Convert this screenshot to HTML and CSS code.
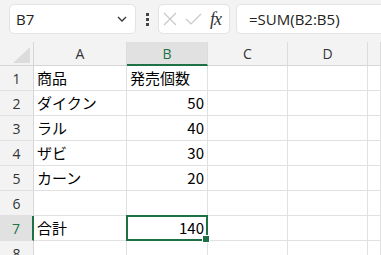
FILE: index.html
```
<html lang="ja">

<head>
  <meta charset="UTF-8">
  <title>Excel</title>
  <link rel="stylesheet" href="styles.css">
</head>

<body>

  <div class="toolbar">
    <div class="name-box">
      <span>B7</span>
      <svg class="chevron" width="12" height="8" viewBox="0 0 12 8">
        <path d="M2 2 L6 6 L10 2" fill="none" stroke="#333" stroke-width="1.3" />
      </svg>
    </div>
    <div class="dots">
      <i></i><i></i><i></i>
    </div>
    <div class="fx-box">
      <svg width="14" height="14" viewBox="0 0 14 14">
        <path d="M1 1 L13 13 M13 1 L1 13" stroke="#c8c8c8" stroke-width="1.2" fill="none" />
      </svg>
      <svg width="17" height="14" viewBox="0 0 17 14">
        <path d="M1 7 L6 12 L16 2" stroke="#c8c8c8" stroke-width="1.2" fill="none" />
      </svg>
      <span class="fx">fx</span>
    </div>
    <div class="formula">=SUM(B2:B5)</div>
  </div>

  <div class="sheet">
    <div class="corner">
      <svg width="33" height="24" viewBox="0 0 33 24">
        <polygon points="30,5 30,21 13,21" fill="#dcdcdc" />
      </svg>
    </div>
    <div class="col-head">A</div>
    <div class="col-head active">B</div>
    <div class="col-head">C</div>
    <div class="col-head">D</div>
    <div class="col-head"></div>

    <div class="row-head">1</div>
    <div class="cell">商品</div>
    <div class="cell">発売個数</div>
    <div class="cell"></div><div class="cell"></div><div class="cell"></div>

    <div class="row-head">2</div>
    <div class="cell">ダイクン</div>
    <div class="cell num">50</div>
    <div class="cell"></div><div class="cell"></div><div class="cell"></div>

    <div class="row-head">3</div>
    <div class="cell">ラル</div>
    <div class="cell num">40</div>
    <div class="cell"></div><div class="cell"></div><div class="cell"></div>

    <div class="row-head">4</div>
    <div class="cell">ザビ</div>
    <div class="cell num">30</div>
    <div class="cell"></div><div class="cell"></div><div class="cell"></div>

    <div class="row-head">5</div>
    <div class="cell">カーン</div>
    <div class="cell num">20</div>
    <div class="cell"></div><div class="cell"></div><div class="cell"></div>

    <div class="row-head">6</div>
    <div class="cell"></div>
    <div class="cell"></div>
    <div class="cell"></div><div class="cell"></div><div class="cell"></div>

    <div class="row-head active">7</div>
    <div class="cell">合計</div>
    <div class="cell num selected">140</div>
    <div class="cell"></div><div class="cell"></div><div class="cell"></div>

    <div class="row-head">8</div>
    <div class="cell"></div>
    <div class="cell"></div>
    <div class="cell"></div><div class="cell"></div><div class="cell"></div>
  </div>

</body>

</html>
```

FILE: styles.css
```
* {
  padding: 0;
  margin: 0;
  box-sizing: border-box;
}

body {
  width: 381px;
  height: 255px;
  overflow: hidden;
  background-color: #fff;
  font-family: "Noto Sans CJK JP", "Noto Sans", sans-serif;
  color: #000;
}

/* 数式バー */
.toolbar {
  height: 42px;
  background-color: #f3f3f3;
  display: flex;
  align-items: flex-start;
  padding: 4px 0 0 9px;
}

.name-box {
  width: 127px;
  height: 30px;
  background-color: #fff;
  border: 1px solid #e3e3e3;
  border-radius: 5px;
  display: flex;
  align-items: center;
  justify-content: space-between;
  padding: 0 7px 0 6px;
  font-family: "Open Sans", "Noto Sans", sans-serif;
  font-size: 15px;
  color: #222;
}

.dots {
  width: 22px;
  height: 30px;
  display: flex;
  flex-direction: column;
  align-items: center;
  justify-content: center;
  gap: 2px;
}

.dots i {
  width: 3px;
  height: 3px;
  background-color: #444;
}

.fx-box {
  width: 72px;
  height: 30px;
  background-color: #fff;
  border: 1px solid #e3e3e3;
  border-radius: 5px;
  display: flex;
  align-items: center;
  padding: 0 4px;
  gap: 8px;
}

.fx-box .fx {
  font-family: "Liberation Serif", serif;
  font-style: italic;
  font-size: 18px;
  color: #333;
  letter-spacing: -1px;
}

.formula {
  flex: 1;
  height: 30px;
  margin-left: 6px;
  background-color: #fff;
  border: 1px solid #e3e3e3;
  border-right: none;
  border-radius: 5px 0 0 5px;
  padding-left: 12px;
  line-height: 28px;
  font-family: "Open Sans", "Noto Sans", sans-serif;
  font-size: 15px;
  color: #222;
}

/* シート */
.sheet {
  display: grid;
  grid-template-columns: 34px 93px 81px 80px 80px 1fr;
  grid-template-rows: 24px repeat(8, 25px);
}

.corner {
  background-color: #f3f3f3;
  border-right: 1px solid #d6d6d6;
  border-bottom: 1px solid #d6d6d6;
}

.corner svg {
  display: block;
}

.col-head {
  background-color: #f3f3f3;
  border-right: 1px solid #dcdcdc;
  border-bottom: 1px solid #d6d6d6;
  text-align: center;
  line-height: 23px;
  font-family: "Open Sans", "Noto Sans", sans-serif;
  font-size: 14px;
  color: #333;
}

.col-head.active {
  background-color: #e1e1e1;
  border-bottom: 2px solid #1e7145;
  color: #1e7145;
}

.row-head {
  background-color: #f3f3f3;
  border-right: 1px solid #d6d6d6;
  border-bottom: 1px solid #e1e1e1;
  text-align: center;
  line-height: 25px;
  font-family: "Open Sans", "Noto Sans", sans-serif;
  font-size: 14px;
  color: #333;
}

.row-head.active {
  background-color: #e1e1e1;
  border-right: 2px solid #1e7145;
  color: #1e7145;
}

.cell {
  border-right: 1px solid #e1e1e1;
  border-bottom: 1px solid #e1e1e1;
  padding: 0 3px;
  line-height: 24px;
  font-size: 15px;
  white-space: nowrap;
}

.cell.num {
  text-align: right;
}

.cell.selected {
  position: relative;
}

/* アクティブセルの枠 */
.cell.selected::after {
  content: '';
  position: absolute;
  top: -1px;
  left: -1px;
  right: -1px;
  bottom: -1px;
  border: 2px solid #1e7145;
}

.cell.selected::before {
  content: '';
  position: absolute;
  right: -3px;
  bottom: -3px;
  width: 6px;
  height: 6px;
  background-color: #1e7145;
  border: 1px solid #fff;
  z-index: 1;
}
```
